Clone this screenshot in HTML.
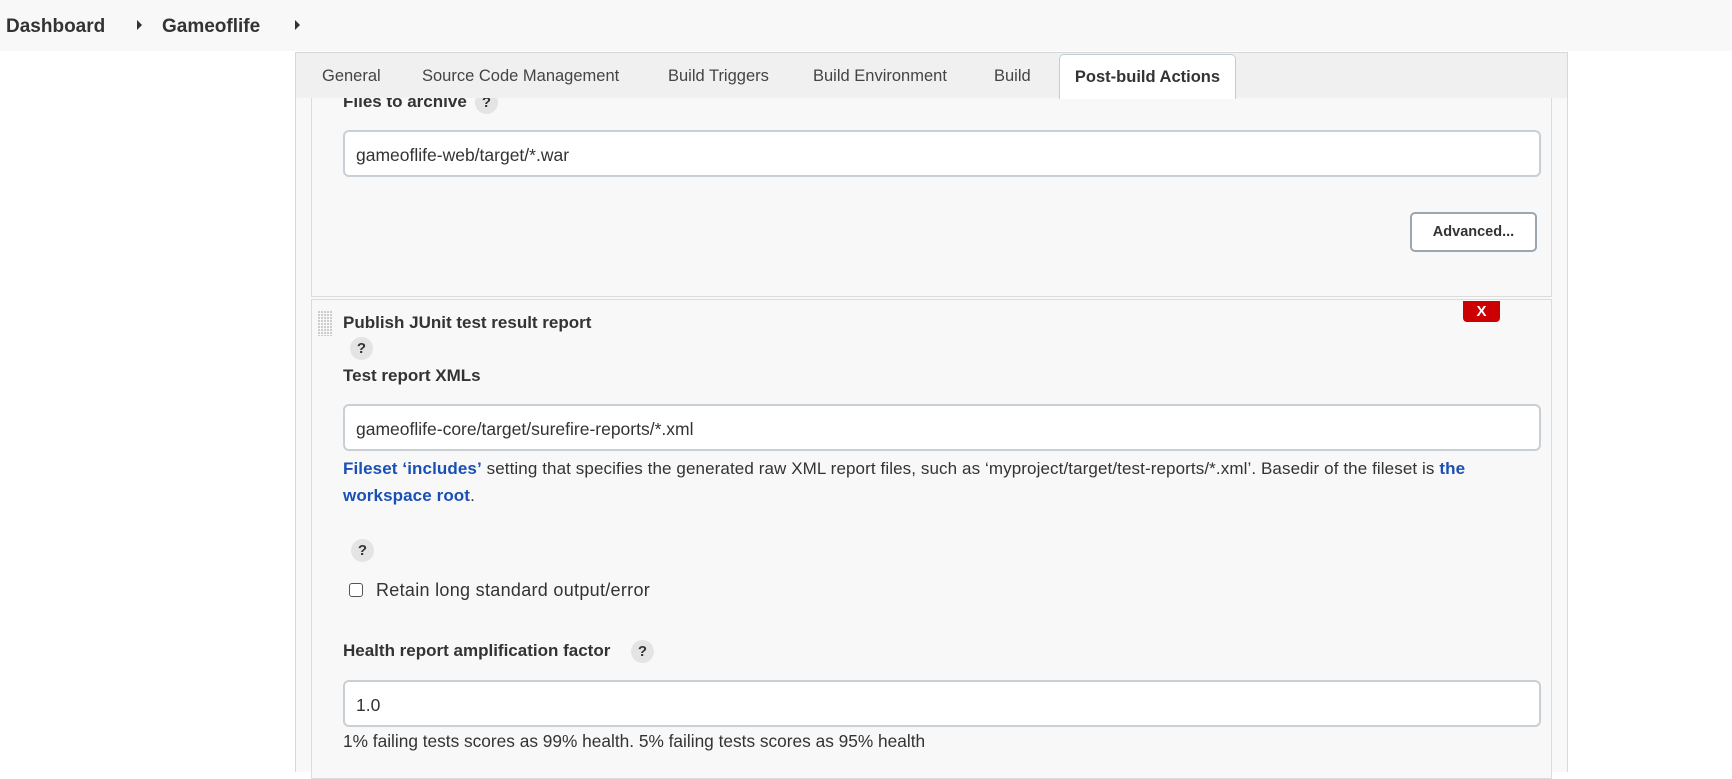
<!DOCTYPE html>
<html><head><meta charset="utf-8"><style>
*{box-sizing:border-box;margin:0;padding:0}
body{width:1732px;height:765px;overflow:hidden;background:#fff;font-family:"Liberation Sans",Arial,sans-serif;color:#333;position:relative;font-size:16px}
.a{position:absolute;white-space:nowrap}
.bc{left:0;top:0;width:1732px;height:51px;background:#f8f8f8}
.bc b{position:absolute;top:16px;font-size:19px;color:#333}
.tri{position:absolute;top:20px;width:0;height:0;border-top:5px solid transparent;border-bottom:5px solid transparent;border-left:5px solid #333}
.panel{left:295px;top:52px;width:1273px;height:720px;background:#f8f8f8;border-left:1px solid #d5d9dc;border-right:1px solid #d5d9dc}
.tabs{left:295px;top:52px;width:1273px;height:46px;background:#f0f0f0;border-top:1px solid #d5d9dc;border-left:1px solid #d5d9dc;border-right:1px solid #d5d9dc}
.tab{position:absolute;top:14px;font-size:16.5px;color:#444}
.tabA{position:absolute;left:763px;top:1px;width:177px;height:45px;background:#fff;border:1px solid #c3ccd1;border-bottom:none;border-radius:5px 5px 0 0;font-weight:bold;font-size:16.5px;color:#333;text-align:center;padding-top:13px}
.sec{background:#f8f8f8;border:1px solid #dcdcdc}
.inp{background:#fff;border:2px solid #c8d0d5;border-radius:6px;font-size:17.5px;color:#333;padding:13px 11px 0}
.lbl{font-weight:bold;font-size:17px;color:#333}
.q{position:absolute;width:23px;height:23px;border-radius:50%;background:#e4e4e4;font-size:15px;font-weight:bold;color:#333;text-align:center;line-height:23px}
.txt{font-size:17px;color:#333}
.lnk{color:#1950b5;font-weight:bold}
</style></head><body>
<div class="a bc"><b style="left:6px">Dashboard</b><span class="tri" style="left:137px"></span><b style="left:162px">Gameoflife</b><span class="tri" style="left:295px"></span></div>
<div class="a panel"></div>
<div class="a sec" style="left:311px;top:90px;width:1241px;height:207px"></div>
<div class="a lbl" style="left:343px;top:92px">Files to archive</div>
<div class="q" style="left:475px;top:91px">?</div>
<div class="a tabs">
<span class="tab" style="left:26px">General</span>
<span class="tab" style="left:126px">Source Code Management</span>
<span class="tab" style="left:372px">Build Triggers</span>
<span class="tab" style="left:517px">Build Environment</span>
<span class="tab" style="left:698px">Build</span>
<div class="tabA">Post-build Actions</div>
</div>
<div class="a inp" style="left:343px;top:130px;width:1198px;height:47px">gameoflife-web/target/*.war</div>
<div class="a" style="left:1410px;top:212px;width:127px;height:40px;background:#fff;border:2px solid #9aa6b0;border-radius:5px;font-weight:bold;font-size:14.5px;color:#333;text-align:center;line-height:36px">Advanced...</div>
<div class="a sec" style="left:311px;top:299px;width:1241px;height:480px"></div>
<svg class="a" style="left:318px;top:311px" width="14" height="25"><defs><pattern id="p" width="3" height="3" patternUnits="userSpaceOnUse"><rect width="2" height="2" fill="#ccc"/></pattern></defs><rect width="14" height="25" fill="url(#p)"/></svg>
<div class="a lbl" style="left:343px;top:313px">Publish JUnit test result report</div>
<div class="a" style="left:1463px;top:301px;width:37px;height:21px;background:#cc0000;border-radius:0 0 4px 4px;color:#fff;font-weight:bold;font-size:15px;text-align:center;line-height:21px">X</div>
<div class="q" style="left:350px;top:337px">?</div>
<div class="a lbl" style="left:343px;top:366px">Test report XMLs</div>
<div class="a inp" style="left:343px;top:404px;width:1198px;height:47px">gameoflife-core/target/surefire-reports/*.xml</div>
<div class="a txt" style="left:343px;top:455px;line-height:27px;white-space:normal;width:1200px;letter-spacing:0.1px"><span class="lnk">Fileset ‘includes’</span> setting that specifies the generated raw XML report files, such as ‘myproject/target/test-reports/*.xml’. Basedir of the fileset is <span class="lnk">the<br>workspace root</span>.</div>
<div class="q" style="left:351px;top:539px">?</div>
<div class="a" style="left:349px;top:583px;width:14px;height:14px;border:1.5px solid #555;border-radius:3px;background:#fff"></div>
<div class="a txt" style="left:376px;top:580px;font-size:18px;letter-spacing:0.3px">Retain long standard output/error</div>
<div class="a lbl" style="left:343px;top:641px">Health report amplification factor</div>
<div class="q" style="left:631px;top:640px">?</div>
<div class="a inp" style="left:343px;top:680px;width:1198px;height:47px">1.0</div>
<div class="a txt" style="left:343px;top:731px;font-size:17.3px">1% failing tests scores as 99% health. 5% failing tests scores as 95% health</div>
</body></html>
